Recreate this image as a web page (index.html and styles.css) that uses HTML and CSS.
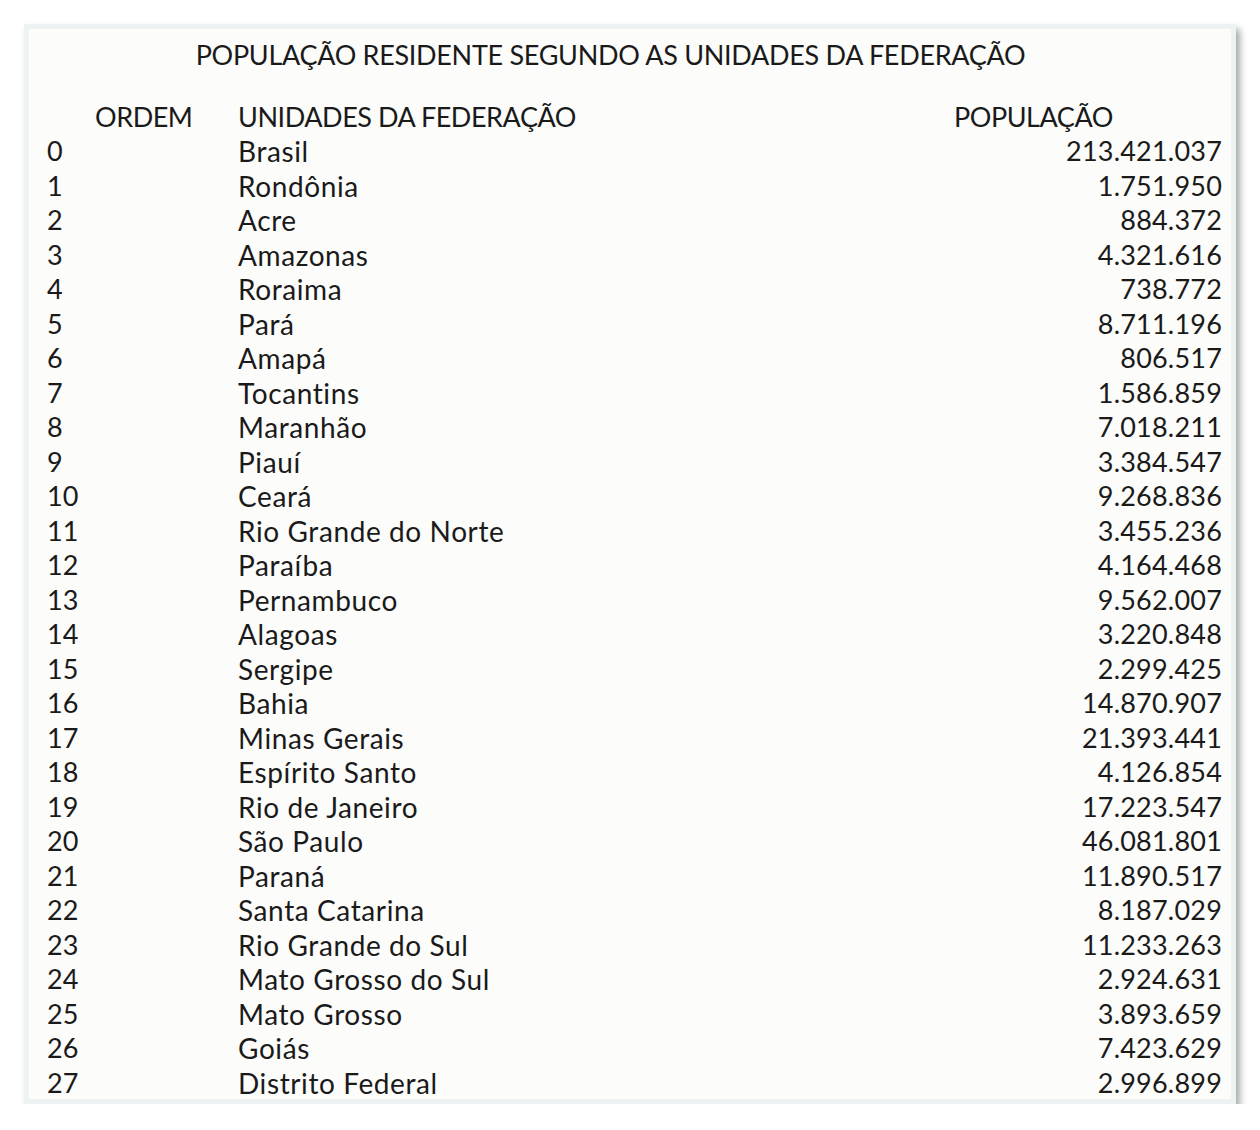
FILE: index.html
```html
<!DOCTYPE html>
<html lang="pt-BR">
<head>
<meta charset="utf-8">
<title>População residente segundo as unidades da federação</title>
<link rel="stylesheet" href="styles.css">
</head>
<body>
<div class="card">
  <h1 class="title">POPULAÇÃO RESIDENTE SEGUNDO AS UNIDADES DA FEDERAÇÃO</h1>
  <div class="table">
    <div class="row head"><span class="ord">ORDEM</span><span class="uf">UNIDADES DA FEDERAÇÃO</span><span class="pop">POPULAÇÃO</span></div>
    <div class="row"><span class="ord">0</span><span class="uf">Brasil</span><span class="pop">213.421.037</span></div>
    <div class="row"><span class="ord">1</span><span class="uf">Rondônia</span><span class="pop">1.751.950</span></div>
    <div class="row"><span class="ord">2</span><span class="uf">Acre</span><span class="pop">884.372</span></div>
    <div class="row"><span class="ord">3</span><span class="uf">Amazonas</span><span class="pop">4.321.616</span></div>
    <div class="row"><span class="ord">4</span><span class="uf">Roraima</span><span class="pop">738.772</span></div>
    <div class="row"><span class="ord">5</span><span class="uf">Pará</span><span class="pop">8.711.196</span></div>
    <div class="row"><span class="ord">6</span><span class="uf">Amapá</span><span class="pop">806.517</span></div>
    <div class="row"><span class="ord">7</span><span class="uf">Tocantins</span><span class="pop">1.586.859</span></div>
    <div class="row"><span class="ord">8</span><span class="uf">Maranhão</span><span class="pop">7.018.211</span></div>
    <div class="row"><span class="ord">9</span><span class="uf">Piauí</span><span class="pop">3.384.547</span></div>
    <div class="row"><span class="ord">10</span><span class="uf">Ceará</span><span class="pop">9.268.836</span></div>
    <div class="row"><span class="ord">11</span><span class="uf">Rio Grande do Norte</span><span class="pop">3.455.236</span></div>
    <div class="row"><span class="ord">12</span><span class="uf">Paraíba</span><span class="pop">4.164.468</span></div>
    <div class="row"><span class="ord">13</span><span class="uf">Pernambuco</span><span class="pop">9.562.007</span></div>
    <div class="row"><span class="ord">14</span><span class="uf">Alagoas</span><span class="pop">3.220.848</span></div>
    <div class="row"><span class="ord">15</span><span class="uf">Sergipe</span><span class="pop">2.299.425</span></div>
    <div class="row"><span class="ord">16</span><span class="uf">Bahia</span><span class="pop">14.870.907</span></div>
    <div class="row"><span class="ord">17</span><span class="uf">Minas Gerais</span><span class="pop">21.393.441</span></div>
    <div class="row"><span class="ord">18</span><span class="uf">Espírito Santo</span><span class="pop">4.126.854</span></div>
    <div class="row"><span class="ord">19</span><span class="uf">Rio de Janeiro</span><span class="pop">17.223.547</span></div>
    <div class="row"><span class="ord">20</span><span class="uf">São Paulo</span><span class="pop">46.081.801</span></div>
    <div class="row"><span class="ord">21</span><span class="uf">Paraná</span><span class="pop">11.890.517</span></div>
    <div class="row"><span class="ord">22</span><span class="uf">Santa Catarina</span><span class="pop">8.187.029</span></div>
    <div class="row"><span class="ord">23</span><span class="uf">Rio Grande do Sul</span><span class="pop">11.233.263</span></div>
    <div class="row"><span class="ord">24</span><span class="uf">Mato Grosso do Sul</span><span class="pop">2.924.631</span></div>
    <div class="row"><span class="ord">25</span><span class="uf">Mato Grosso</span><span class="pop">3.893.659</span></div>
    <div class="row"><span class="ord">26</span><span class="uf">Goiás</span><span class="pop">7.423.629</span></div>
    <div class="row"><span class="ord">27</span><span class="uf">Distrito Federal</span><span class="pop">2.996.899</span></div>
  </div>
</div>
</body>
</html>
```

FILE: styles.css
```css
html, body {
  margin: 0;
  padding: 0;
  background: #ffffff;
}

body {
  font-family: Lato, "Open Sans", "Liberation Sans", sans-serif;
  color: #1a1a1a;
}

.card {
  box-sizing: border-box;
  width: 1212px;
  height: 1080px;
  margin: 24px 0 0 24px;
  border: 5px solid #edf2f2;
  background: #fcfcfa;
  box-shadow: 4px 5px 7px rgba(0, 0, 0, 0.35);
  padding: 9px 9px 0 18px;
}

.title {
  margin: 0;
  font-size: 27px;
  font-weight: 400;
  letter-spacing: -0.3px;
  line-height: 34.5px;
  height: 34.5px;
  text-align: center;
  padding-right: 48px;
}

.table {
  margin-top: 27px;
  font-size: 27px;
  line-height: 34.5px;
}

.row {
  display: grid;
  grid-template-columns: 191px 1fr 268px;
  height: 34.5px;
  white-space: nowrap;
}

.uf {
  font-size: 28px;
  letter-spacing: 0.6px;
}

.pop {
  text-align: right;
  letter-spacing: 0.2px;
}

.head span {
  font-size: 27px;
  letter-spacing: -0.45px;
}

.head .ord {
  padding-left: 48px;
}

.head .pop {
  text-align: left;
}
```
